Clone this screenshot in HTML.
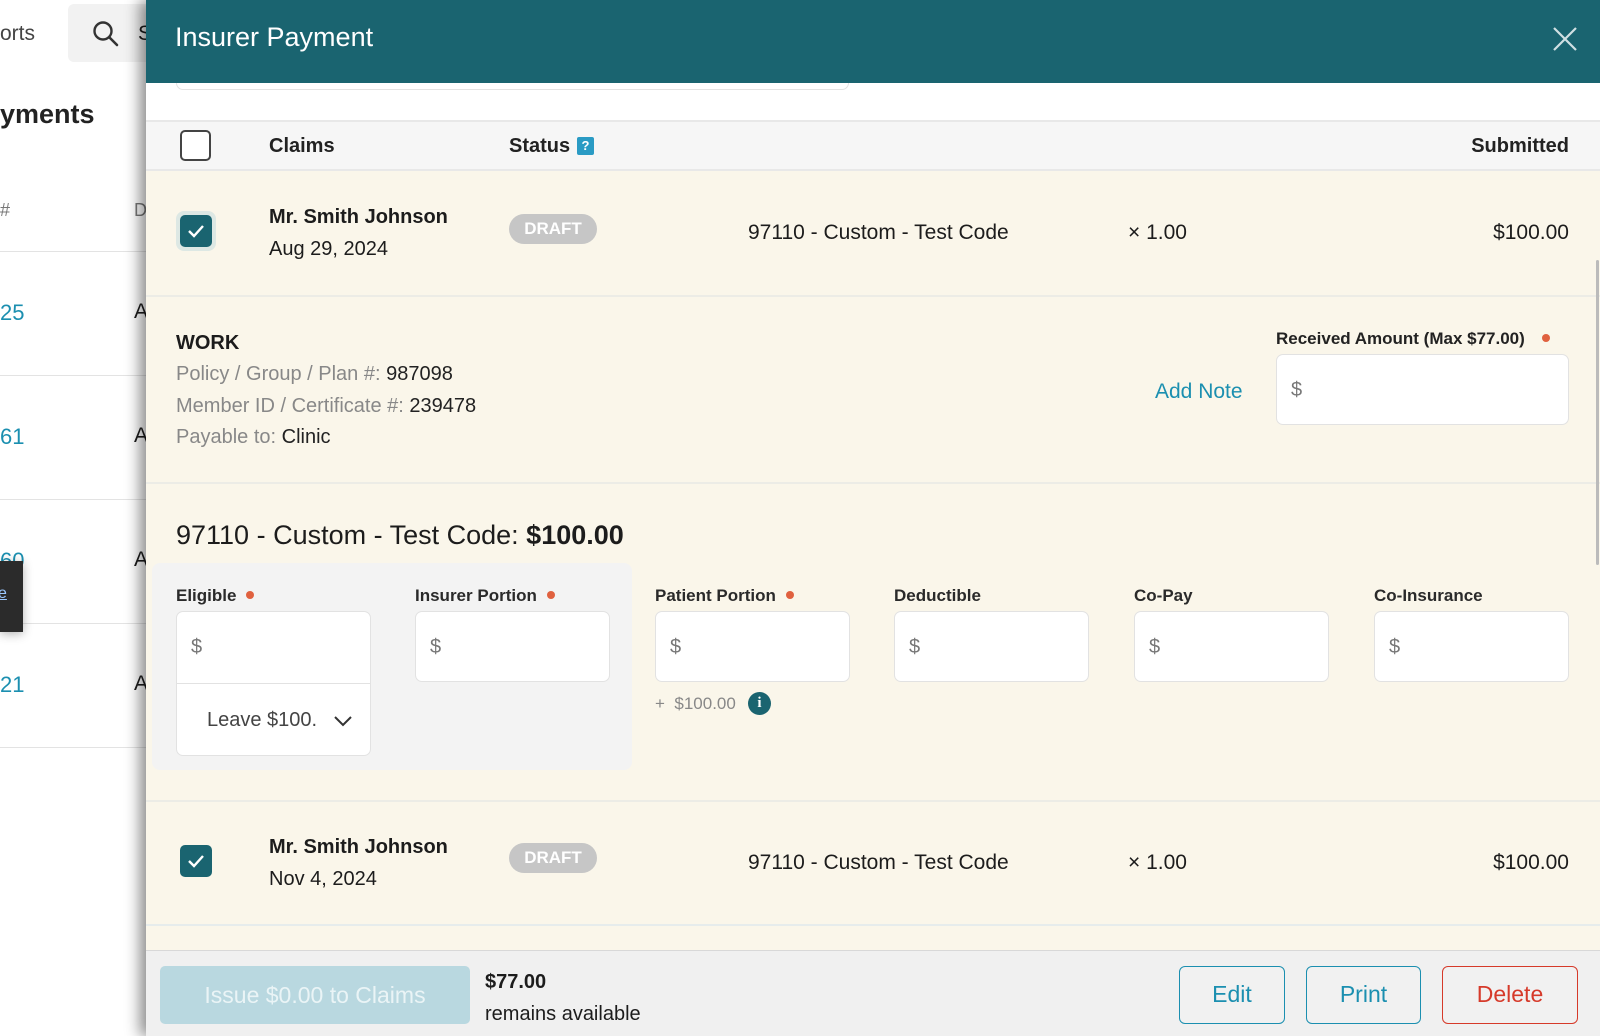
<!DOCTYPE html>
<html><head><meta charset="utf-8"><style>
*{margin:0;padding:0;box-sizing:border-box}
body{width:1600px;height:1036px;overflow:hidden;position:relative;background:#fff;font-family:"Liberation Sans",sans-serif;color:#1c1c1c}
.a{position:absolute;white-space:nowrap}
.tl{color:#1b8fb0;font-size:22px}
.line{position:absolute;height:1px;background:#e3e3e3}
.panel{position:absolute;left:146px;top:0;width:1454px;height:1036px;background:#faf6ea;box-shadow:-6px 0 14px rgba(0,0,0,.45)}
.inp{position:absolute;background:#fff;border:1px solid #e2e2e2;border-radius:7px;height:71px;width:195px}
.inp span{position:absolute;left:14px;top:24px;font-size:20px;color:#777}
.lbl{position:absolute;font-size:17px;font-weight:bold;color:#2a2a2a;top:586px}
.dot{display:inline-block;width:8px;height:8px;border-radius:50%;background:#e0613f;margin-left:10px;vertical-align:2px}
.cb{position:absolute;left:180px;width:32px;height:32px;border-radius:5px;background:#1a6470}
.cb svg{position:absolute;left:6px;top:7px}
.name{font-size:20px;font-weight:bold}
.date{font-size:20px}
.draft{position:absolute;left:509px;width:88px;height:30px;border-radius:15px;background:#c6c6c6;color:#fff;font-size:17px;font-weight:bold;text-align:center;line-height:30px}
.big{font-size:21px}
.btn{position:absolute;top:966px;height:58px;border:1.5px solid #1b8fb0;border-radius:6px;color:#1b8fb0;font-size:23px;text-align:center;line-height:55px;background:#f1f1f1}
</style></head><body>
<div class="a" style="left:0;top:22px;font-size:21px;color:#444">orts</div>
<div class="a" style="left:68px;top:4px;width:90px;height:58px;background:#f2f2f2;border-radius:6px"></div>
<svg class="a" style="left:92px;top:20px" width="28" height="28" viewBox="0 0 28 28"><circle cx="11" cy="11" r="8.5" fill="none" stroke="#333" stroke-width="2.4"/><line x1="17.5" y1="17.5" x2="25" y2="25" stroke="#333" stroke-width="2.6" stroke-linecap="round"/></svg>
<div class="a" style="left:138px;top:22px;font-size:21px">S</div>
<div class="a" style="left:0;top:99px;font-size:27px;font-weight:bold;color:#222">yments</div>
<div class="a" style="left:0;top:200px;font-size:18px;color:#777">#</div>
<div class="a" style="left:134px;top:200px;font-size:18px;color:#777">D</div>
<div class="line" style="left:0;top:251px;width:146px"></div>
<div class="line" style="left:0;top:375px;width:146px"></div>
<div class="line" style="left:0;top:499px;width:146px"></div>
<div class="line" style="left:0;top:623px;width:146px"></div>
<div class="line" style="left:0;top:747px;width:146px"></div>
<div class="a tl" style="left:0;top:300px">25</div><div class="a big" style="left:134px;top:300px">A</div>
<div class="a tl" style="left:0;top:424px">61</div><div class="a big" style="left:134px;top:424px">A</div>
<div class="a tl" style="left:0;top:548px">60</div><div class="a big" style="left:134px;top:548px">A</div>
<div class="a tl" style="left:0;top:672px">21</div><div class="a big" style="left:134px;top:672px">A</div>
<div class="a" style="left:0;top:561px;width:23px;height:71px;background:#2b2b2b;box-shadow:0 2px 10px rgba(0,0,0,.3)"><span style="position:absolute;left:-2px;top:24px;color:#9cc8ff;font-size:16px;text-decoration:underline">e</span></div>

<div class="panel"></div>
<div class="a" style="left:176px;top:72px;width:673px;height:17px;border:1px solid #e3e3e3;border-top:none;border-radius:0 0 10px 10px;background:#fff"></div>
<div class="a" style="left:146px;top:0;width:1454px;height:83px;background:#1a6470"></div>
<div class="a" style="left:175px;top:22px;font-size:27px;color:#fff">Insurer Payment</div>
<svg class="a" style="left:1553px;top:27px" width="24" height="24" viewBox="0 0 24 24"><path d="M1 1L23 23M23 1L1 23" stroke="#d0e0e3" stroke-width="2.2"/></svg>
<div class="a" style="left:146px;top:83px;width:1454px;height:37px;background:#fff"></div>
<div class="a" style="left:176px;top:83px;width:673px;height:7px;border:1px solid #e3e3e3;border-top:none;border-radius:0 0 10px 10px"></div>
<div class="a" style="left:146px;top:120px;width:1454px;height:51px;background:#f6f6f6;border-top:2px solid #e8e8e8;border-bottom:2px solid #e8e8e8"></div>
<div class="a" style="left:180px;top:130px;width:31px;height:31px;border:2px solid #444;border-radius:5px;background:#fff"></div>
<div class="a" style="left:269px;top:135px;font-size:20px;font-weight:bold;color:#222">Claims</div>
<div class="a" style="left:509px;top:135px;font-size:20px;font-weight:bold;color:#222">Status</div>
<div class="a" style="left:577px;top:137px;width:17px;height:18px;background:#2a9bc4;border-radius:2px;color:#fff;font-size:13px;font-weight:bold;text-align:center;line-height:18px">?</div>
<div class="a" style="right:31px;top:135px;font-size:20px;font-weight:bold;color:#222">Submitted</div>
<div class="a" style="left:176px;top:211px;width:40px;height:40px;border-radius:8px;background:#dde8e4"></div>
<div class="cb" style="top:215px"><svg width="20" height="18" viewBox="0 0 20 18"><path d="M3 9l5 5L17 4" fill="none" stroke="#fff" stroke-width="2.4"/></svg></div>
<div class="a name" style="left:269px;top:206px">Mr. Smith Johnson</div>
<div class="a date" style="left:269px;top:238px">Aug 29, 2024</div>
<div class="draft" style="top:214px">DRAFT</div>
<div class="a big" style="left:748px;top:221px">97110 - Custom - Test Code</div>
<div class="a big" style="left:1128px;top:221px">× 1.00</div>
<div class="a big" style="right:31px;top:221px">$100.00</div>
<div class="a" style="left:146px;top:295px;width:1454px;height:2px;background:#ecece6"></div>
<div class="a" style="left:176px;top:332px;font-size:20px;font-weight:bold">WORK</div>
<div class="a" style="left:176px;top:363px;font-size:20px;color:#888">Policy / Group / Plan #: <span style="color:#222">987098</span></div>
<div class="a" style="left:176px;top:395px;font-size:20px;color:#888">Member ID / Certificate #: <span style="color:#222">239478</span></div>
<div class="a" style="left:176px;top:426px;font-size:20px;color:#888">Payable to: <span style="color:#222">Clinic</span></div>
<div class="a" style="left:1155px;top:380px;font-size:21px;color:#1b8fb0">Add Note</div>
<div class="a" style="left:1276px;top:329px;font-size:17px;font-weight:bold;color:#222">Received Amount (Max $77.00)<span class="dot" style="margin-left:17px"></span></div>
<div class="inp" style="left:1276px;top:354px;width:293px"><span>$</span></div>
<div class="a" style="left:146px;top:482px;width:1454px;height:2px;background:#ecece6"></div>
<div class="a" style="left:176px;top:520px;font-size:27px">97110 - Custom - Test Code: <b>$100.00</b></div>
<div class="a" style="left:152px;top:563px;width:480px;height:207px;background:#f3f3f3;border-radius:8px"></div>
<div class="lbl" style="left:176px">Eligible<span class="dot"></span></div>
<div class="lbl" style="left:415px">Insurer Portion<span class="dot"></span></div>
<div class="lbl" style="left:655px">Patient Portion<span class="dot"></span></div>
<div class="lbl" style="left:894px">Deductible</div>
<div class="lbl" style="left:1134px">Co-Pay</div>
<div class="lbl" style="left:1374px">Co-Insurance</div>
<div class="inp" style="left:176px;top:611px;height:145px"><span>$</span><div style="position:absolute;left:0;right:0;top:71px;height:1px;background:#e2e2e2"></div><div style="position:absolute;left:30px;top:97px;font-size:20px;color:#444">Leave $100.</div><svg style="position:absolute;left:156px;top:103px" width="20" height="12" viewBox="0 0 20 12"><path d="M2 2l8 8 8-8" fill="none" stroke="#333" stroke-width="2"/></svg></div>
<div class="inp" style="left:415px;top:611px"><span>$</span></div>
<div class="inp" style="left:655px;top:611px"><span>$</span></div>
<div class="inp" style="left:894px;top:611px"><span>$</span></div>
<div class="inp" style="left:1134px;top:611px"><span>$</span></div>
<div class="inp" style="left:1374px;top:611px"><span>$</span></div>
<div class="a" style="left:655px;top:694px;font-size:17px;color:#888">+ &nbsp;$100.00</div>
<div class="a" style="left:748px;top:692px;width:23px;height:23px;border-radius:50%;background:#1a6470;color:#fff;font-size:15px;font-weight:bold;text-align:center;line-height:23px;font-family:'Liberation Serif',serif">i</div>
<div class="a" style="left:146px;top:800px;width:1454px;height:2px;background:#ecece6"></div>
<div class="cb" style="top:845px"><svg width="20" height="18" viewBox="0 0 20 18"><path d="M3 9l5 5L17 4" fill="none" stroke="#fff" stroke-width="2.4"/></svg></div>
<div class="a name" style="left:269px;top:836px">Mr. Smith Johnson</div>
<div class="a date" style="left:269px;top:868px">Nov 4, 2024</div>
<div class="draft" style="top:843px">DRAFT</div>
<div class="a big" style="left:748px;top:851px">97110 - Custom - Test Code</div>
<div class="a big" style="left:1128px;top:851px">× 1.00</div>
<div class="a big" style="right:31px;top:851px">$100.00</div>
<div class="a" style="left:146px;top:924px;width:1454px;height:2px;background:#e6ecec"></div>
<div class="a" style="left:146px;top:950px;width:1454px;height:86px;background:#f0f0f0;border-top:1px solid #d8d8d8"></div>
<div class="a" style="left:160px;top:966px;width:310px;height:58px;background:#b9d8e0;border-radius:5px;color:#eaf4f6;font-size:23px;text-align:center;line-height:58px">Issue $0.00 to Claims</div>
<div class="a" style="left:485px;top:971px;font-size:20px;font-weight:bold">$77.00</div>
<div class="a" style="left:485px;top:1003px;font-size:20px">remains available</div>
<div class="btn" style="left:1179px;width:106px">Edit</div>
<div class="btn" style="left:1306px;width:115px">Print</div>
<div class="btn" style="left:1442px;width:136px;border-color:#d63a2a;color:#d63a2a">Delete</div>
<div class="a" style="left:1596px;top:260px;width:3px;height:305px;background:#bbb;border-radius:2px"></div>
</body></html>
